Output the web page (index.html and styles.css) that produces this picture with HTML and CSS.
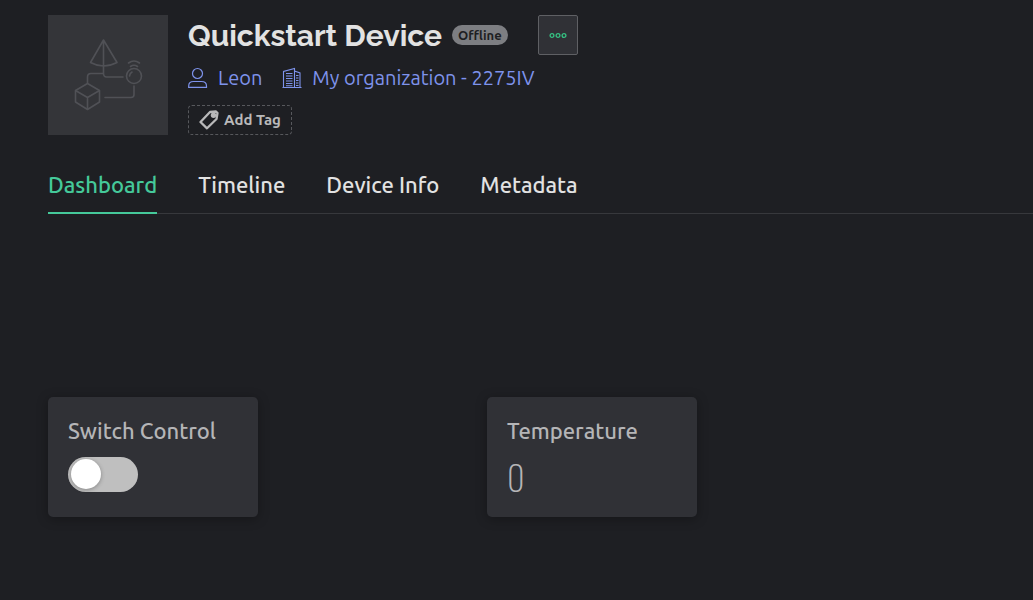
FILE: index.html
```html
<!DOCTYPE html>
<html lang="en">
<head>
<meta charset="utf-8">
<meta name="viewport" content="width=device-width, initial-scale=1">
<title>Quickstart Device</title>
<link rel="stylesheet" href="styles.css">
</head>
<body>
<main class="page">
  <header class="device">
    <div class="device-image">
      <svg class="device-art" viewBox="0 0 120 120" fill="none" stroke="currentColor" stroke-width="1.6" stroke-linejoin="round" stroke-linecap="round" aria-hidden="true">
        <path d="M55.500 25L42.500 47.500Q49 51 55.500 51Q62 51 69 47.500ZM55.500 25V58Q55.500 62 58.500 62H75M55.500 58.500H43Q39.500 58.500 39.500 62V68"/>
        <path d="M39.500 68.500L51.500 75.500V87L39.500 94.500L27.500 87V75.500ZM27.500 75.500L39.500 82.500L51.500 75.500M39.500 82.500V94.500"/>
        <path d="M57 82.500H83Q86 82.500 86 79.500V71"/>
        <circle cx="86" cy="61" r="7.500"/>
        <path d="M81.500 61Q82 58 84 57M82.500 51.500Q86 49 89.500 51.500M80.500 48Q86 44 91.500 48"/>
      </svg>
    </div>
    <div class="device-info">
      <div class="title-row">
        <h1 class="title">Quickstart Device</h1>
        <span class="status">Offline</span>
        <button class="more" type="button" aria-label="More actions">
          <svg width="20" height="8" viewBox="0 0 20 8" fill="none" stroke="currentColor" stroke-width="1.300" aria-hidden="true"><circle cx="4" cy="4.500" r="1.900"/><circle cx="10" cy="4.500" r="1.900"/><circle cx="16" cy="4.500" r="1.900"/></svg>
        </button>
      </div>
      <div class="owners">
        <a class="owner" href="#user">
          <svg width="20" height="22" viewBox="0 0 20 22" fill="none" stroke="currentColor" stroke-width="1.200" aria-hidden="true"><circle cx="9.500" cy="6.500" r="5"/><path d="M.7 20.400V19Q.7 14.500 5.500 14.500H13.500Q18.500 14.500 18.500 19V20.400Z"/></svg>
          <span>Leon</span>
        </a>
        <a class="owner" href="#organization">
          <svg width="20" height="22" viewBox="0 0 20 22" fill="none" stroke="currentColor" stroke-width="1.100" aria-hidden="true"><path d="M.5 20.500H19.500M1.500 20.500V4.500L12.500 1.500V20.500M12.500 4L18 6V20.500"/><path d="M4 6.500H10.500M4 9H10.500M4 11.500H10.500M4 14H10.500M4 16.500H10.500M4 18.700H10.500M14 8.500H16.500M14 11H16.500M14 13.500H16.500M14 16H16.500M14 18.500H16.500"/></svg>
          <span>My organization - 2275IV</span>
        </a>
      </div>
      <button class="add-tag" type="button">
        <svg width="20" height="20" viewBox="0 0 20 20" fill="none" stroke="currentColor" stroke-width="2.300" stroke-linejoin="round" aria-hidden="true"><path d="M11 2L17 1.500L18.500 3L17.500 9L8 18.300L1.500 12Z"/><circle cx="14.500" cy="5.200" r="2.700" fill="currentColor" stroke="none"/></svg>
        <span>Add Tag</span>
      </button>
    </div>
  </header>
  <nav class="tabs" aria-label="Device sections">
    <a class="tab tab-active" href="#dashboard" aria-current="page">Dashboard</a>
    <a class="tab" href="#timeline">Timeline</a>
    <a class="tab" href="#info">Device Info</a>
    <a class="tab" href="#metadata">Metadata</a>
  </nav>
  <section class="widgets">
    <div class="widget">
      <label class="widget-title" for="switch">Switch Control</label>
      <input class="switch" id="switch" type="checkbox" role="switch">
    </div>
    <div class="widget">
      <h2 class="widget-title">Temperature</h2>
      <output class="value">0</output>
    </div>
  </section>
</main>
</body>
</html>
```
FILE: styles.css
```css
* {
  box-sizing: border-box;
}

body {
  margin: 0;
  background: #1e1f23;
  color: #e2e2e2;
  font-family: "Ubuntu", "Noto Sans", sans-serif;
}

.page {
  padding: 15px 0 40px 48px;
}

.device {
  display: flex;
  gap: 20px;
}

.device-image {
  width: 120px;
  height: 120px;
  background: #343539;
  color: #505156;
}

.device-art {
  display: block;
}

.device-info {
  display: flex;
  flex-direction: column;
  align-items: flex-start;
}

.title-row {
  display: flex;
  align-items: center;
  height: 40px;
}

.title {
  margin: 0;
  padding-top: 2px;
  font: 700 30px/40px "Raleway", "Lato", sans-serif;
}

.status {
  margin: 0 30px 0 10px;
  padding: 0 6px;
  border-radius: 10px;
  background: #7d7e82;
  color: #1e1f23;
  font-size: 13px;
  font-weight: 600;
  line-height: 20px;
}

.more {
  display: grid;
  place-items: center;
  width: 40px;
  height: 40px;
  padding: 0;
  border: 1px solid #5f6064;
  border-radius: 2px;
  background: #303136;
  color: #35c283;
}

.owners {
  display: flex;
  gap: 20px;
  height: 50px;
  padding-top: 8px;
}

.owner {
  display: flex;
  align-items: center;
  gap: 10px;
  height: 30px;
  color: #7e93ec;
  font-size: 20px;
  line-height: 22px;
  text-decoration: none;
}

.add-tag {
  display: flex;
  align-items: center;
  gap: 5px;
  height: 30px;
  padding: 0 10px;
  border: 1px dashed #57585c;
  border-radius: 4px;
  background: transparent;
  color: #b9b9ba;
  font: 600 15px/20px "Ubuntu", "Noto Sans", sans-serif;
}

.tabs {
  display: flex;
  gap: 41px;
  margin-top: 30px;
  border-bottom: 1px solid #37383c;
}

.tab {
  height: 49px;
  margin-bottom: -1px;
  color: #e2e2e2;
  font-size: 22px;
  font-weight: 500;
  line-height: 40px;
  text-decoration: none;
}

.tab-active {
  border-bottom: 2px solid #45c99a;
  color: #45c99a;
}

.widgets {
  display: flex;
  flex-wrap: wrap;
  gap: 10px 229px;
  margin-top: 183px;
}

.widget {
  display: flex;
  flex-direction: column;
  align-items: flex-start;
  width: 210px;
  height: 120px;
  padding: 20px;
  border-radius: 5px;
  background: #303136;
  box-shadow: 0 2px 12px rgba(0, 0, 0, 0.3);
  color: #b5b5b7;
}

.widget-title {
  margin: 0;
  font-size: 22px;
  font-weight: 500;
  line-height: 28px;
  white-space: nowrap;
}

.switch {
  appearance: none;
  width: 70px;
  height: 35px;
  margin: 12px 0 0;
  padding: 2px 3px;
  border-radius: 18px;
  background: #bfbfbf;
}

.switch::before {
  content: "";
  display: block;
  width: 30px;
  height: 30px;
  border-radius: 50%;
  background: #fff;
  box-shadow: 0 1px 4px rgba(0, 0, 0, 0.3);
}

.switch:checked::before {
  margin-left: auto;
}

.value {
  margin-top: 12px;
  font-family: "Oswald", "Roboto Condensed", sans-serif;
  font-size: 34px;
  font-weight: 200;
  line-height: 40px;
}
```
